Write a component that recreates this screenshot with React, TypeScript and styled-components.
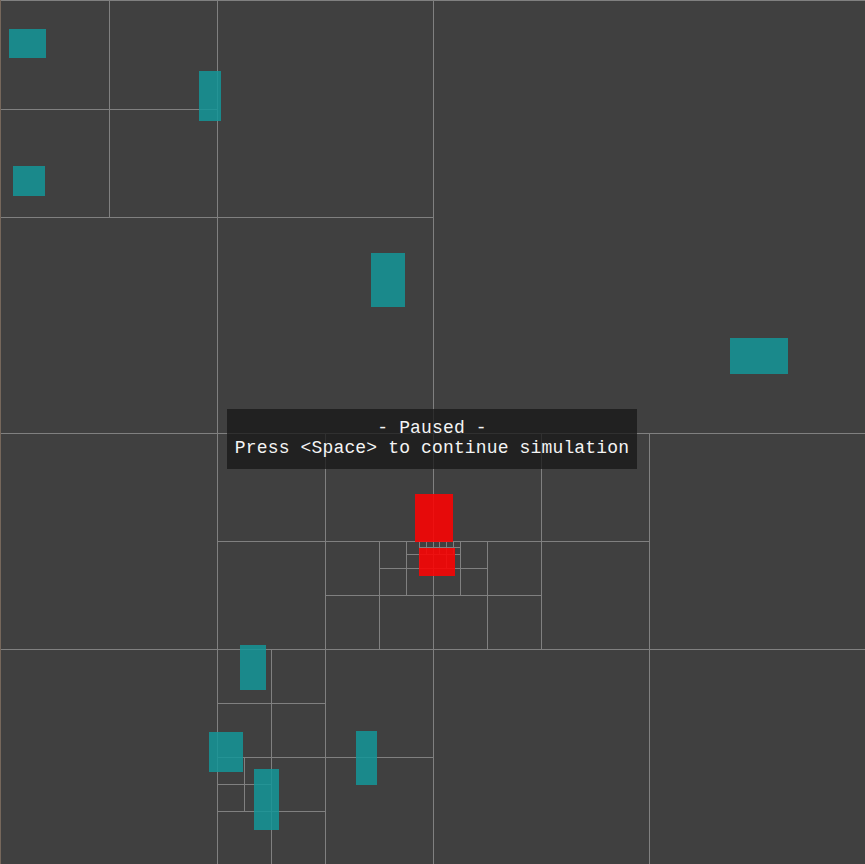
import React from "react";
import styled, { createGlobalStyle } from "styled-components";

const GlobalStyle = createGlobalStyle`
  html, body {
    margin: 0;
    padding: 0;
    background: #404040;
    overflow: hidden;
  }
`;

const Stage = styled.div`
  position: relative;
  width: 865px;
  height: 864px;
  overflow: hidden;
  background: #404040;
`;

const Canvas = styled.svg`
  display: block;
  width: 865px;
  height: 864px;
`;

const Banner = styled.div`
  position: absolute;
  left: 227px;
  top: 409px;
  width: 410px;
  height: 60px;
  box-sizing: border-box;
  padding: 9px 0 11px;
  background: rgba(24, 24, 24, 0.77);
  display: flex;
  flex-direction: column;
  align-items: center;
`;

const BannerLine = styled.div`
  font-family: "Courier New", Courier, "Nimbus Mono PS", "Nimbus Mono L", FreeMono, "Liberation Mono", monospace;
  font-size: 18px;
  font-weight: 400;
  letter-spacing: 0.15px;
  line-height: 20px;
  color: #f4f4f4;
  white-space: pre;
`;

const LINE = "#808080";
const TEAL = "rgba(20, 151, 153, 0.85)";
const RED = "rgba(248, 4, 4, 0.9)";

const SUBDIVIDED = new Set<string>([
  "",
  "0",
  "00",
  "2",
  "21",
  "213",
  "2131",
  "21311",
  "213111",
  "23",
  "230",
  "232",
  "2320",
  "3",
  "30",
  "302",
  "3020",
  "30200",
  "302000",
  "302001",
]);

type Seg = { x1: number; y1: number; x2: number; y2: number };

const px = (u: number) => Math.floor(1 + u);

function buildLines(): Seg[] {
  const out: Seg[] = [];
  const walk = (x: number, y: number, s: number, path: string) => {
    if (!SUBDIVIDED.has(path)) return;
    const h = s / 2;
    const vx = px(x + h) + 0.5;
    out.push({ x1: vx, y1: px(y), x2: vx, y2: px(y + s) + 1 });
    const hy = px(y + h) + 0.5;
    out.push({ x1: px(x), y1: hy, x2: px(x + s) + 1, y2: hy });
    walk(x, y, h, path + "0");
    walk(x + h, y, h, path + "1");
    walk(x, y + h, h, path + "2");
    walk(x + h, y + h, h, path + "3");
  };
  walk(0, 0, 864, "");
  return out;
}

const LINES = buildLines();

type Box = { x: number; y: number; w: number; h: number };

const TEAL_BOXES: Box[] = [
  { x: 9, y: 29, w: 37, h: 29 },
  { x: 199, y: 71, w: 22, h: 50 },
  { x: 13, y: 166, w: 32, h: 30 },
  { x: 371, y: 253, w: 34, h: 54 },
  { x: 730, y: 338, w: 58, h: 36 },
  { x: 240, y: 645, w: 26, h: 45 },
  { x: 209, y: 732, w: 34, h: 40 },
  { x: 254, y: 769, w: 25, h: 61 },
  { x: 356, y: 731, w: 21, h: 54 },
];

const RED_BOXES: Box[] = [
  { x: 415, y: 494, w: 38, h: 48 },
  { x: 419, y: 548, w: 36, h: 28 },
];

export default function App() {
  return (
    <>
      <GlobalStyle />
      <Stage>
        <Canvas viewBox="0 0 865 864" shapeRendering="crispEdges">
          <line x1={0} y1={0.5} x2={865} y2={0.5} stroke={LINE} strokeWidth={1} />
          <line x1={0.5} y1={0} x2={0.5} y2={864} stroke="#76675b" strokeWidth={1} />
          {LINES.map((l, i) => (
            <line key={i} {...l} stroke={LINE} strokeWidth={1} />
          ))}
          {TEAL_BOXES.map((b, i) => (
            <rect key={`t${i}`} x={b.x} y={b.y} width={b.w} height={b.h} fill={TEAL} />
          ))}
          {RED_BOXES.map((b, i) => (
            <rect key={`r${i}`} x={b.x} y={b.y} width={b.w} height={b.h} fill={RED} />
          ))}
        </Canvas>
        <Banner>
          <BannerLine>- Paused -</BannerLine>
          <BannerLine>Press &lt;Space&gt; to continue simulation</BannerLine>
        </Banner>
      </Stage>
    </>
  );
}
